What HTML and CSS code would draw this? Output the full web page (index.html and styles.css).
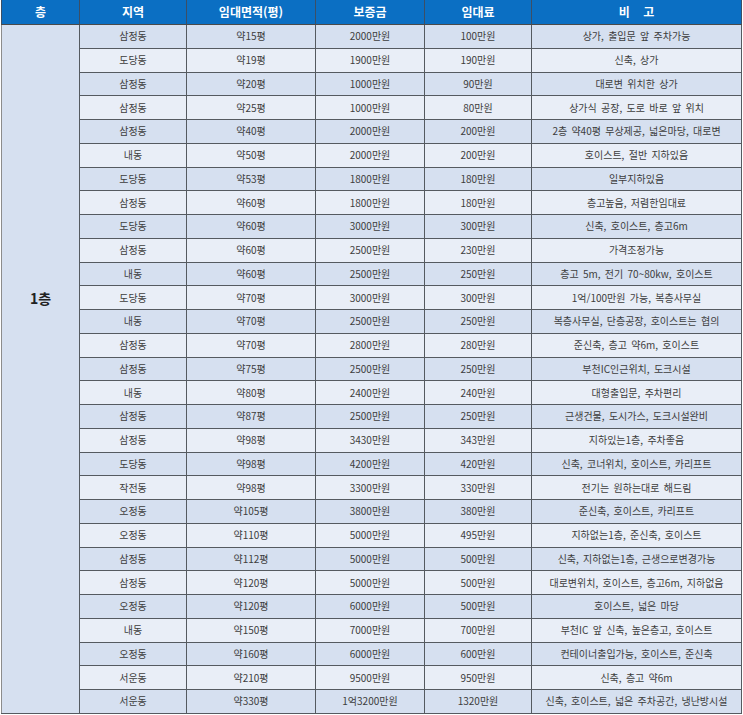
FILE: index.html
```html
<!DOCTYPE html>
<html lang="ko">
<head>
<meta charset="utf-8">
<title>임대 목록</title>
<link rel="stylesheet" href="styles.css">
</head>
<body>
<table class="list">
  <colgroup>
    <col class="c-floor"><col class="c-area"><col class="c-size"><col class="c-dep"><col class="c-rent"><col class="c-note">
  </colgroup>
  <thead>
    <tr><th>층</th><th>지역</th><th>임대면적(평)</th><th>보증금</th><th>임대료</th><th>비&nbsp;&nbsp;&nbsp;&nbsp;고</th></tr>
  </thead>
  <tbody>
    <tr class="b"><td class="floor" rowspan="29">1층</td><td>삼정동</td><td>약15평</td><td>2000만원</td><td>100만원</td><td>상가, 출입문 앞 주차가능</td></tr>
    <tr class="w"><td>도당동</td><td>약19평</td><td>1900만원</td><td>190만원</td><td>신축, 상가</td></tr>
    <tr class="b"><td>삼정동</td><td>약20평</td><td>1000만원</td><td>90만원</td><td>대로변 위치한 상가</td></tr>
    <tr class="w"><td>삼정동</td><td>약25평</td><td>1000만원</td><td>80만원</td><td>상가식 공장, 도로 바로 앞 위치</td></tr>
    <tr class="b"><td>삼정동</td><td>약40평</td><td>2000만원</td><td>200만원</td><td>2층 약40평 무상제공, 넓은마당, 대로변</td></tr>
    <tr class="w"><td>내동</td><td>약50평</td><td>2000만원</td><td>200만원</td><td>호이스트, 절반 지하있음</td></tr>
    <tr class="b"><td>도당동</td><td>약53평</td><td>1800만원</td><td>180만원</td><td>일부지하있음</td></tr>
    <tr class="w"><td>삼정동</td><td>약60평</td><td>1800만원</td><td>180만원</td><td>층고높음, 저렴한임대료</td></tr>
    <tr class="b"><td>도당동</td><td>약60평</td><td>3000만원</td><td>300만원</td><td>신축, 호이스트, 층고6m</td></tr>
    <tr class="w"><td>삼정동</td><td>약60평</td><td>2500만원</td><td>230만원</td><td>가격조정가능</td></tr>
    <tr class="b"><td>내동</td><td>약60평</td><td>2500만원</td><td>250만원</td><td>층고 5m, 전기 70~80kw, 호이스트</td></tr>
    <tr class="w"><td>도당동</td><td>약70평</td><td>3000만원</td><td>300만원</td><td>1억/100만원 가능, 복층사무실</td></tr>
    <tr class="b"><td>내동</td><td>약70평</td><td>2500만원</td><td>250만원</td><td>복층사무실, 단층공장, 호이스트는 협의</td></tr>
    <tr class="w"><td>삼정동</td><td>약70평</td><td>2800만원</td><td>280만원</td><td>준신축, 층고 약6m, 호이스트</td></tr>
    <tr class="b"><td>삼정동</td><td>약75평</td><td>2500만원</td><td>250만원</td><td>부천IC인근위치, 도크시설</td></tr>
    <tr class="w"><td>내동</td><td>약80평</td><td>2400만원</td><td>240만원</td><td>대형출입문, 주차편리</td></tr>
    <tr class="b"><td>삼정동</td><td>약87평</td><td>2500만원</td><td>250만원</td><td>근생건물, 도시가스, 도크시설완비</td></tr>
    <tr class="w"><td>삼정동</td><td>약98평</td><td>3430만원</td><td>343만원</td><td>지하있는1층, 주차좋음</td></tr>
    <tr class="b"><td>도당동</td><td>약98평</td><td>4200만원</td><td>420만원</td><td>신축, 코너위치, 호이스트, 카리프트</td></tr>
    <tr class="w"><td>작전동</td><td>약98평</td><td>3300만원</td><td>330만원</td><td>전기는 원하는대로 해드림</td></tr>
    <tr class="b"><td>오정동</td><td>약105평</td><td>3800만원</td><td>380만원</td><td>준신축, 호이스트, 카리프트</td></tr>
    <tr class="w"><td>오정동</td><td>약110평</td><td>5000만원</td><td>495만원</td><td>지하없는1층, 준신축, 호이스트</td></tr>
    <tr class="b"><td>삼정동</td><td>약112평</td><td>5000만원</td><td>500만원</td><td>신축, 지하없는1층, 근생으로변경가능</td></tr>
    <tr class="w"><td>삼정동</td><td>약120평</td><td>5000만원</td><td>500만원</td><td>대로변위치, 호이스트, 층고6m, 지하없음</td></tr>
    <tr class="b"><td>오정동</td><td>약120평</td><td>6000만원</td><td>500만원</td><td>호이스트, 넓은 마당</td></tr>
    <tr class="w"><td>내동</td><td>약150평</td><td>7000만원</td><td>700만원</td><td>부천IC 앞 신축, 높은층고, 호이스트</td></tr>
    <tr class="b"><td>오정동</td><td>약160평</td><td>6000만원</td><td>600만원</td><td>컨테이너출입가능, 호이스트, 준신축</td></tr>
    <tr class="w"><td>서운동</td><td>약210평</td><td>9500만원</td><td>950만원</td><td>신축, 층고 약6m</td></tr>
    <tr class="b"><td>서운동</td><td>약330평</td><td>1억3200만원</td><td>1320만원</td><td>신축, 호이스트, 넓은 주차공간, 냉난방시설</td></tr>
  </tbody>
</table>
</body>
</html>
```

FILE: styles.css
```css
html, body {
  margin: 0;
  padding: 0;
  background: #ffffff;
}

body {
  font-family: "Noto Sans CJK KR", "Noto Sans", sans-serif;
}

.list {
  margin: 0 0 0 1px;
  width: 740px;
  table-layout: fixed;
  border-collapse: collapse;
  border: 1px solid #8c8c8c;
  border-top: none;
}

.c-floor { width: 78px; }
.c-area { width: 107px; }
.c-size { width: 129px; }
.c-dep { width: 109px; }
.c-rent { width: 107px; }
.c-note { width: 210px; }

.list th {
  height: 24px;
  padding: 0;
  background: #0b6fc3;
  color: #ffffff;
  font-size: 12px;
  font-weight: 700;
  text-align: center;
  vertical-align: middle;
  border-left: 1px solid #3c4f66;
  border-right: 1px solid #3c4f66;
  border-bottom: 1px solid #4a4a4a;
  line-height: 1;
}

.list td {
  height: 22.76px;
  padding: 0;
  font-size: 10px;
  line-height: 1;
  word-spacing: 1.5px;
  color: #3d3d3d;
  text-align: center;
  vertical-align: middle;
  border: 1px solid #555a60;
  white-space: nowrap;
  overflow: hidden;
}

.list tr.b td {
  background: #d6e0f0;
}

.list tr.w td {
  background: #e9eef7;
}

.list td.floor {
  background: #d6e0f0;
  font-size: 14px;
  font-weight: 700;
  color: #222222;
  padding-bottom: 141px;
  border-left: 1px solid #8c8c8c;
}
```
